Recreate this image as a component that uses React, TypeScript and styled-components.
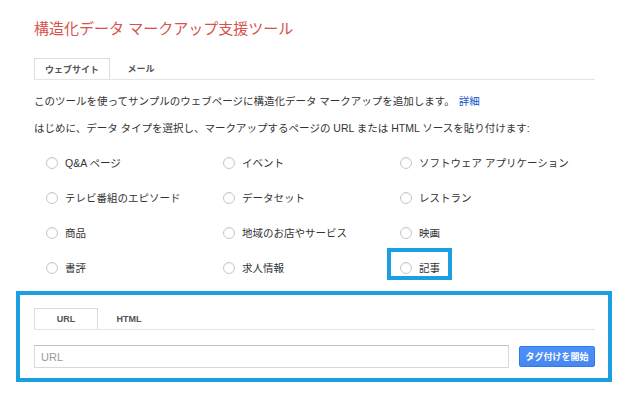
import styled, { createGlobalStyle } from "styled-components"

const GlobalStyle = createGlobalStyle`
  html, body {
    margin: 0;
    padding: 0;
    background: #fff;
  }
  body {
    font-family: "Liberation Sans", "Noto Sans CJK JP", Arial, sans-serif;
    color: #333;
  }
`

const Page = styled.div`
  width: 624px;
  height: 400px;
  overflow: hidden;
  padding-top: 19px;
  box-sizing: border-box;
`

const Content = styled.div`
  margin-left: 34px;
  width: 561px;
`

const Title = styled.h1`
  margin: 0;
  font-size: 15px;
  line-height: 20px;
  font-weight: normal;
  color: #d6524a;
`

const TabBar = styled.div<{ $top: number }>`
  display: flex;
  margin-top: ${(p) => p.$top}px;
  border-bottom: 1px solid #e5e5e5;
  height: 21px;
`

const Tab = styled.div<{ $active?: boolean; $width: number }>`
  width: ${(p) => p.$width}px;
  height: ${(p) => (p.$active ? 21 : 20)}px;
  box-sizing: border-box;
  display: flex;
  align-items: center;
  justify-content: center;
  font-size: 9px;
  font-weight: bold;
  color: #555;
  background: #fff;
  border: 1px solid ${(p) => (p.$active ? "#dcdcdc" : "transparent")};
  border-bottom: none;
  margin-bottom: -1px;
`

const Paragraph = styled.p<{ $top: number }>`
  margin: ${(p) => p.$top}px 0 0;
  font-size: 10.5px;
  line-height: 20px;
  color: #333;
  white-space: nowrap;
`

const Link = styled.a`
  color: #1155cc;
  text-decoration: none;
  margin-left: 4px;
`

const OptionGrid = styled.div`
  display: grid;
  grid-template-columns: repeat(3, 177px);
  grid-auto-rows: 35px;
  margin-top: 7px;
  margin-left: 12px;
`

const Option = styled.label<{ $highlight?: boolean }>`
  position: relative;
  display: flex;
  align-items: center;
  gap: 7px;
  font-size: 10.5px;
  color: #333;
  white-space: nowrap;

  ${(p) =>
    p.$highlight &&
    `
    &::after {
      content: "";
      position: absolute;
      left: -13px;
      top: -2px;
      width: 65px;
      height: 32px;
      box-sizing: border-box;
      border: 4px solid #1a9fe0;
    }
  `}
`

const Radio = styled.span`
  flex: none;
  width: 12px;
  height: 12px;
  box-sizing: border-box;
  border-radius: 50%;
  border: 1px solid #c8c8c8;
  background: #fff;
  box-shadow: inset 0 1px 1px rgba(0, 0, 0, 0.06);
`

const SourceFrame = styled.div`
  margin: 6px 0 0 16px;
  width: 596px;
  box-sizing: border-box;
  border: 4px solid #1a9fe0;
  padding: 13px 13px 10px 14px;
`

const InputRow = styled.div`
  display: flex;
  align-items: center;
  gap: 10px;
  margin-top: 15px;
`

const UrlInput = styled.input`
  width: 475px;
  height: 23px;
  box-sizing: border-box;
  border: 1px solid #d9d9d9;
  border-top-color: #c0c0c0;
  padding: 0 6px;
  font-family: "Liberation Sans", "Noto Sans CJK JP", Arial, sans-serif;
  font-size: 11px;
  color: #333;
  outline: none;

  &::placeholder {
    color: #999;
  }
`

const StartButton = styled.button`
  width: 76px;
  height: 21px;
  box-sizing: border-box;
  border: 1px solid #3079ed;
  border-radius: 2px;
  background: linear-gradient(#4d90fe, #4787ed);
  color: #fff;
  font-family: "Liberation Sans", "Noto Sans CJK JP", Arial, sans-serif;
  font-size: 9px;
  font-weight: bold;
  padding: 0;
`

const types = [
  "Q&A ページ",
  "イベント",
  "ソフトウェア アプリケーション",
  "テレビ番組のエピソード",
  "データセット",
  "レストラン",
  "商品",
  "地域のお店やサービス",
  "映画",
  "書評",
  "求人情報",
  "記事",
]

const App = () => {
  return (
    <Page>
      <GlobalStyle />
      <Content>
        <Title>構造化データ マークアップ支援ツール</Title>
        <TabBar $top={19}>
          <Tab $active $width={76}>ウェブサイト</Tab>
          <Tab $width={62}>メール</Tab>
        </TabBar>
        <Paragraph $top={11}>
          このツールを使ってサンプルのウェブページに構造化データ マークアップを追加します。
          <Link href="#">詳細</Link>
        </Paragraph>
        <Paragraph $top={7}>
          はじめに、データ タイプを選択し、マークアップするページの URL または HTML ソースを貼り付けます:
        </Paragraph>
      </Content>
      <Content>
        <OptionGrid>
          {types.map((t) => (
            <Option key={t} $highlight={t === "記事"}>
              <Radio />
              {t}
            </Option>
          ))}
        </OptionGrid>
      </Content>
      <SourceFrame>
        <TabBar $top={0}>
          <Tab $active $width={64}>URL</Tab>
          <Tab $width={62}>HTML</Tab>
        </TabBar>
        <InputRow>
          <UrlInput placeholder="URL" />
          <StartButton>タグ付けを開始</StartButton>
        </InputRow>
      </SourceFrame>
    </Page>
  )
}

export default App
